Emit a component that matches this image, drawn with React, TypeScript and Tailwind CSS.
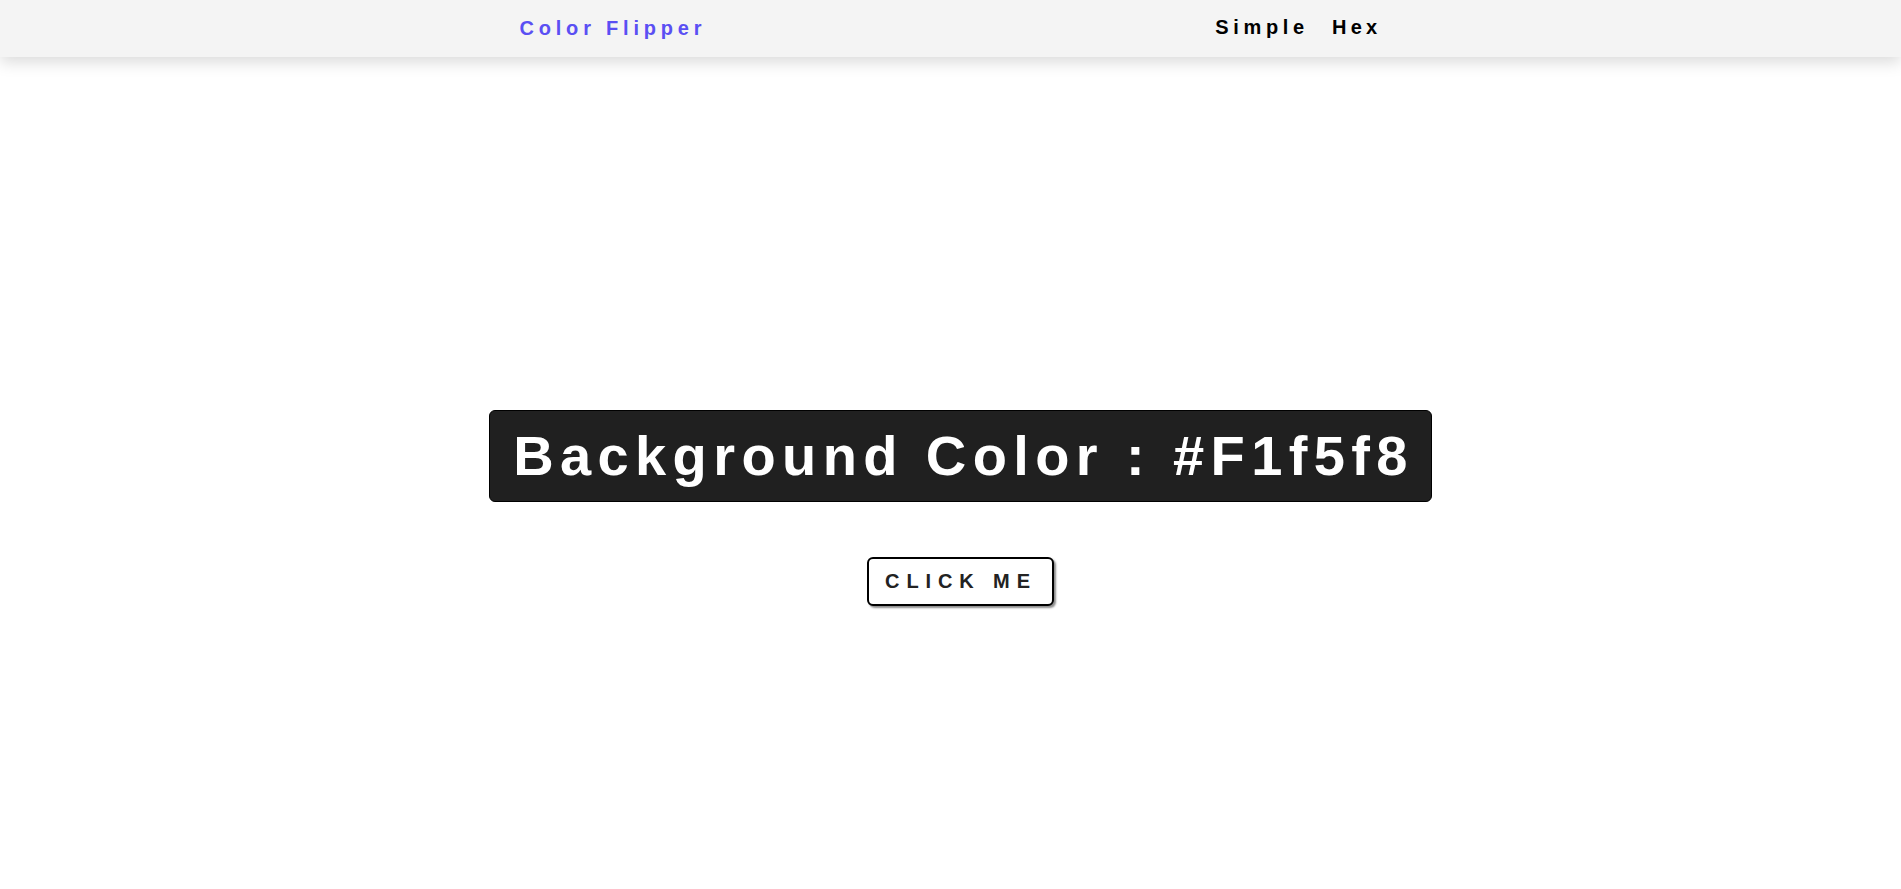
export default function App() {
  return (
    <div className="min-h-screen bg-white font-['Liberation_Sans',Arial,sans-serif]">
      <nav className="h-[57px] bg-[#f4f4f4] shadow-[0_5px_15px_rgba(0,0,0,0.15)]">
        <div className="w-[862px] h-full mx-auto flex items-center justify-between">
          <a href="#" className="text-[20px] leading-[23px] font-bold tracking-[4.8px] text-[#5a4ff3]">
            Color Flipper
          </a>
          <ul className="flex items-center gap-[23px]">
            <li>
              <a href="#" className="text-[20px] leading-[23px] font-bold tracking-[4.7px] text-black">
                Simple
              </a>
            </li>
            <li>
              <a href="#" className="text-[20px] leading-[23px] font-bold tracking-[4.3px] text-black">
                Hex
              </a>
            </li>
          </ul>
        </div>
      </nav>

      <main className="flex flex-col items-center pt-[353px] pl-[20px]">
        <h2 className="bg-[#202020] border border-black rounded-md pl-[23px] pr-[17px] py-[13px] text-[56px] leading-[64px] font-bold tracking-[6.4px] text-white">
          Background Color : #F1f5f8
        </h2>
        <button className="mt-[55px] bg-white border-2 border-black rounded-md pl-[16px] pr-[15px] py-[11px] text-[20px] leading-[23px] font-bold tracking-[6.9px] text-[#222] uppercase shadow-[2px_2px_2px_rgba(0,0,0,0.45)]">
          Click me
        </button>
      </main>
    </div>
  );
}
